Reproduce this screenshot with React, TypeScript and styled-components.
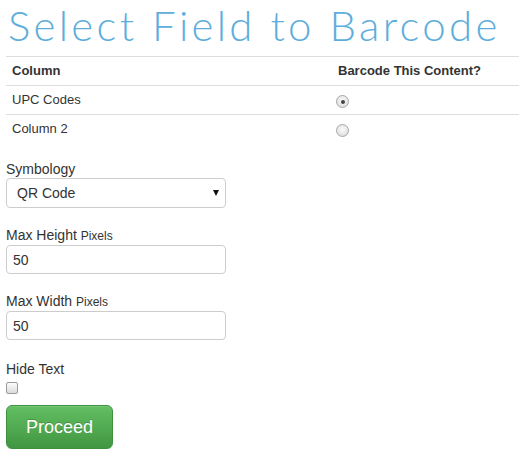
import styled, { createGlobalStyle } from "styled-components";

const GlobalStyle = createGlobalStyle`
  * { box-sizing: border-box; }
  body {
    margin: 0;
    background: #fff;
    color: #333;
    font-family: "Liberation Sans", Arial, sans-serif;
    font-size: 14px;
  }
`;

const Page = styled.div`
  padding: 0 0 0 6px;
`;

const Title = styled.h1`
  margin: 0 0 6px 2px;
  font-family: Lato, "Open Sans", sans-serif;
  font-weight: 300;
  font-size: 42px;
  line-height: 50px;
  letter-spacing: 3.3px;
  color: #5eaedb;
  white-space: nowrap;
`;

const Table = styled.table`
  width: 513px;
  border-collapse: collapse;
  margin-bottom: 17px;
  font-size: 13px;
`;

const Cell = styled.td<{ $head?: boolean; $wide?: boolean }>`
  border-top: 1px solid #ddd;
  padding: 5px 6px;
  line-height: 18px;
  font-weight: ${(p) => (p.$head ? "bold" : "normal")};
  width: ${(p) => (p.$wide ? "326px" : "auto")};
  vertical-align: top;
  text-align: left;
`;

const Radio = styled.span<{ $checked?: boolean }>`
  display: block;
  width: 13px;
  height: 13px;
  margin: 4px 0 0 -2px;
  border-radius: 50%;
  border: 1px solid #a8a8a8;
  background: radial-gradient(circle at 50% 40%, #fafafa 0%, #e2e2e2 70%, #d4d4d4 100%);
  position: relative;

  &::after {
    content: "";
    display: ${(p) => (p.$checked ? "block" : "none")};
    position: absolute;
    left: 3.5px;
    top: 3.5px;
    width: 4px;
    height: 4px;
    border-radius: 50%;
    background: #444;
  }
`;

const Group = styled.div<{ $gap?: number }>`
  margin-bottom: ${(p) => (p.$gap ?? 18)}px;
`;

const Label = styled.label`
  display: block;
  font-size: 14px;
  line-height: 18px;
`;

const Small = styled.small`
  font-size: 12px;
`;

const SelectWrap = styled.div`
  position: relative;
  width: 220px;

  &::after {
    content: "";
    position: absolute;
    right: 7px;
    top: 12px;
    border-left: 3.5px solid transparent;
    border-right: 3.5px solid transparent;
    border-top: 6px solid #111;
    pointer-events: none;
  }
`;

const Select = styled.select`
  appearance: none;
  display: block;
  width: 220px;
  height: 30px;
  padding: 0 10px;
  border: 1px solid #ccc;
  border-radius: 4px;
  background: #fff;
  color: #333;
  font-family: "Liberation Sans", Arial, sans-serif;
  font-size: 14px;
  outline: none;
`;

const Input = styled.input`
  display: block;
  width: 220px;
  height: 29px;
  padding: 0 6px;
  border: 1px solid #ccc;
  border-radius: 4px;
  color: #333;
  font-family: "Liberation Sans", Arial, sans-serif;
  font-size: 14px;
  outline: none;
`;

const Check = styled.span`
  display: block;
  width: 12px;
  height: 12px;
  margin-top: 4px;
  border: 1px solid #9a9a9a;
  border-radius: 2px;
  background: linear-gradient(to bottom, #fcfcfc, #dcdcdc);
`;

const Button = styled.button`
  display: block;
  margin-top: 11px;
  width: 107px;
  height: 44px;
  border: 1px solid #3e8f3e;
  border-radius: 6px;
  background: linear-gradient(to bottom, #62bf62 0%, #419641 100%);
  color: #fff;
  font-family: "Liberation Sans", Arial, sans-serif;
  font-size: 18px;
  text-shadow: 0 -1px 0 rgba(0, 0, 0, 0.2);
  box-shadow: inset 0 1px 0 rgba(255, 255, 255, 0.15), 0 1px 1px rgba(0, 0, 0, 0.075);
  cursor: pointer;
`;

const rows = [
  { name: "UPC Codes", checked: true },
  { name: "Column 2", checked: false },
];

export default function App() {
  return (
    <Page>
      <GlobalStyle />
      <Title>Select Field to Barcode</Title>
      <Table>
        <tbody>
          <tr>
            <Cell $head $wide>Column</Cell>
            <Cell $head>Barcode This Content?</Cell>
          </tr>
          {rows.map((r) => (
            <tr key={r.name}>
              <Cell $wide>{r.name}</Cell>
              <Cell>
                <Radio $checked={r.checked} />
              </Cell>
            </tr>
          ))}
        </tbody>
      </Table>
      <Group>
        <Label>Symbology</Label>
        <SelectWrap>
          <Select defaultValue="qr">
            <option value="qr">QR Code</option>
          </Select>
        </SelectWrap>
      </Group>
      <Group>
        <Label>
          Max Height <Small>Pixels</Small>
        </Label>
        <Input defaultValue="50" />
      </Group>
      <Group $gap={20}>
        <Label>
          Max Width <Small>Pixels</Small>
        </Label>
        <Input defaultValue="50" />
      </Group>
      <div>
        <Label>Hide Text</Label>
        <Check />
        <Button>Proceed</Button>
      </div>
    </Page>
  );
}
